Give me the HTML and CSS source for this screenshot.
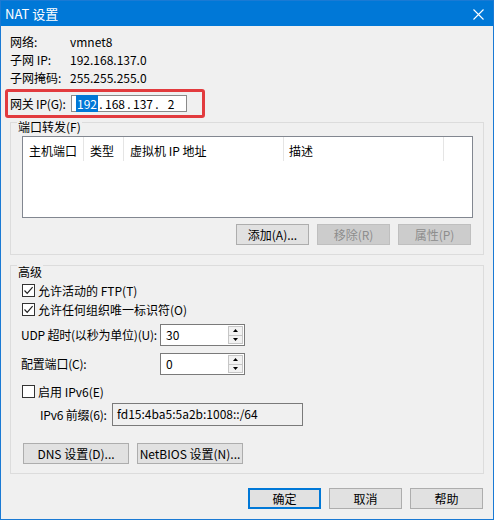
FILE: index.html
```html
<!DOCTYPE html>
<html lang="zh-CN">
<head>
<meta charset="utf-8">
<title>NAT 设置</title>
<link rel="stylesheet" href="styles.css">
</head>
<body>
<div class="win">
  <div class="titlebar">
    <span class="title">NAT 设置</span>
    <span class="close"><svg width="11" height="11" viewBox="0 0 11 11"><path d="M0.5 0.5L10.5 10.5M10.5 0.5L0.5 10.5" stroke="#fff" stroke-width="1.1" fill="none"/></svg></span>
  </div>
  <div class="content">
    <div class="info">
      <div class="irow"><span class="ilabel">网络:</span><span>vmnet8</span></div>
      <div class="irow"><span class="ilabel">子网 IP:</span><span>192.168.137.0</span></div>
      <div class="irow"><span class="ilabel">子网掩码:</span><span>255.255.255.0</span></div>
    </div>
    <div class="gw">
      <span class="glab">网关 IP(G):</span>
      <div class="ipfield">
        <span class="seg"><span class="sel">192</span></span><span class="dot">.</span>
        <span class="seg">168</span><span class="dot">.</span>
        <span class="seg">137</span><span class="dot">.</span>
        <span class="seg">2</span>
      </div>
      <span class="mark"></span>
    </div>

    <div class="group port">
      <div class="gtitle gt-port">端口转发(F)</div>
      <div class="list">
        <div class="lhead">
          <div class="col c1">主机端口</div>
          <div class="col c2">类型</div>
          <div class="col c3">虚拟机 IP 地址</div>
          <div class="col c4">描述</div>
        </div>
      </div>
      <div class="btnrow">
        <div class="btn">添加(A)...</div>
        <div class="btn dis">移除(R)</div>
        <div class="btn dis">属性(P)</div>
      </div>
    </div>

    <div class="group adv">
      <div class="gtitle gt-adv">高级</div>
      <div class="chkrow first">
        <span class="cb"><svg width="11" height="11" viewBox="0 0 11 11"><path d="M1.5 5.5L4.2 8.3L9.6 2.2" stroke="#222" stroke-width="1.2" fill="none"/></svg></span>
        <span>允许活动的 FTP(T)</span>
      </div>
      <div class="chkrow">
        <span class="cb"><svg width="11" height="11" viewBox="0 0 11 11"><path d="M1.5 5.5L4.2 8.3L9.6 2.2" stroke="#222" stroke-width="1.2" fill="none"/></svg></span>
        <span>允许任何组织唯一标识符(O)</span>
      </div>
      <div class="frow udp">
        <span class="flabel">UDP 超时(以秒为单位)(U):</span>
        <div class="spin">
          <span class="val">30</span>
          <div class="sbtns">
            <span class="sb"><svg width="5" height="3" viewBox="0 0 5 3"><path d="M0 3L2.5 0L5 3Z" fill="#000"/></svg></span>
            <span class="sb"><svg width="5" height="3" viewBox="0 0 5 3"><path d="M0 0L2.5 3L5 0Z" fill="#000"/></svg></span>
          </div>
        </div>
      </div>
      <div class="frow cport">
        <span class="flabel">配置端口(C):</span>
        <div class="spin">
          <span class="val">0</span>
          <div class="sbtns">
            <span class="sb"><svg width="5" height="3" viewBox="0 0 5 3"><path d="M0 3L2.5 0L5 3Z" fill="#000"/></svg></span>
            <span class="sb"><svg width="5" height="3" viewBox="0 0 5 3"><path d="M0 0L2.5 3L5 0Z" fill="#000"/></svg></span>
          </div>
        </div>
      </div>
      <div class="chkrow v6">
        <span class="cb"></span>
        <span>启用 IPv6(E)</span>
      </div>
      <div class="prow">
        <span class="plabel">IPv6 前缀(6):</span>
        <div class="pfield">fd15:4ba5:5a2b:1008::/64</div>
      </div>
      <div class="dnsrow">
        <div class="btn wide">DNS 设置(D)...</div>
        <div class="btn wide">NetBIOS 设置(N)...</div>
      </div>
    </div>

    <div class="footer">
      <div class="btn def">确定</div>
      <div class="btn">取消</div>
      <div class="btn">帮助</div>
    </div>
  </div>
</div>
</body>
</html>
```
FILE: styles.css
```css
* { box-sizing: border-box; }
html, body { margin: 0; padding: 0; }
body {
  width: 494px;
  height: 520px;
  background: #f0f0f0;
  font-family: "Noto Sans CJK SC", "Noto Sans", sans-serif;
  font-size: 12px;
  color: #000;
}
.win {
  width: 494px;
  height: 520px;
  border: 1px solid #1a7ad4;
  background: #f0f0f0;
  display: flex;
  flex-direction: column;
}
.titlebar {
  height: 25px;
  flex: none;
  background: #0078d7;
  color: #fff;
  display: flex;
  align-items: center;
  justify-content: space-between;
  padding: 0 9px 0 4px;
}
.title { font-size: 13px; line-height: 16px; }
.close { display: flex; margin-top: 1px; }

.content { padding: 7px 9px 0 9px; }

.irow { display: flex; height: 18px; line-height: 18px; }
.ilabel { width: 60px; flex: none; white-space: nowrap; }

.gw {
  position: relative;
  display: flex;
  align-items: center;
  height: 19px;
  margin-top: 7px;
}
.glab { width: 61px; flex: none; white-space: nowrap; line-height: 16px; letter-spacing: -0.2px; }
.ipfield {
  width: 116px;
  flex: none;
  height: 17px;
  background: #fff;
  border: 1px solid #8a8a8a;
  display: flex;
  align-items: center;
  padding-left: 4px;
  line-height: 13px;
}
.seg { width: 22px; text-align: center; }
.dot { width: 6px; text-align: center; }
.sel { background: #0078d7; color: #fff; padding: 0 1px; }
.mark {
  position: absolute;
  left: -5px;
  top: -5px;
  width: 200px;
  height: 29px;
  border: 3px solid #e23b3e;
  border-radius: 3px;
}

.group { border: 1px solid #dcdcdc; }
.port { margin-top: 9px; height: 133px; }
.adv { margin-top: 10px; height: 209px; }
.gtitle {
  width: fit-content;
  background: #f0f0f0;
  padding: 0 1px;
  margin-left: 6px;
  line-height: 14px;
}
.gt-port { margin-top: -3px; }
.gt-adv { margin-top: -1px; }

.list {
  margin: 2px 0 0 11px;
  width: 451px;
  height: 82px;
  background: #fff;
  border: 1px solid #828790;
}
.lhead { display: flex; height: 24px; }
.col {
  height: 24px;
  border-right: 1px solid #e5e5e5;
  padding: 4px 0 0 6px;
  line-height: 20px;
  white-space: nowrap;
}
.c1 { width: 61px; }
.c2 { width: 40px; }
.c3 { width: 160px; }
.c4 { width: 160px; padding-left: 5px; }

.btnrow {
  display: flex;
  justify-content: flex-end;
  gap: 8px;
  margin: 6px 12px 0 0;
}
.btn {
  width: 73px;
  height: 21px;
  flex: none;
  background: #e1e1e1;
  border: 1px solid #adadad;
  display: flex;
  align-items: center;
  justify-content: center;
  line-height: 14px;
  white-space: nowrap;
}
.btn.dis { background: #cccccc; border-color: #bfbfbf; color: #8d8d8d; }
.btn.wide { width: 106px; }
.btn.def { border-color: #0078d7; box-shadow: inset 0 0 0 1px #0078d7; }

.chkrow {
  display: flex;
  align-items: center;
  gap: 3px;
  height: 19px;
  margin-left: 11px;
  line-height: 16px;
  white-space: nowrap;
}
.chkrow.first { margin-top: 2px; }
.chkrow.v6 { margin-top: 7px; }
.cb {
  width: 13px;
  height: 13px;
  flex: none;
  border: 1px solid #333;
  background: #fff;
  display: flex;
}

.frow {
  display: flex;
  align-items: center;
  height: 22px;
  margin-left: 10px;
}
.frow.udp { margin-top: 5px; }
.frow.cport { margin-top: 7px; }
.flabel { width: 139px; flex: none; white-space: nowrap; line-height: 16px; letter-spacing: -0.2px; }
.spin {
  width: 85px;
  height: 22px;
  flex: none;
  background: #fff;
  border: 1px solid #7a7a7a;
  padding: 1px;
  display: flex;
  justify-content: space-between;
}
.val { padding-left: 4px; line-height: 18px; }
.sbtns { width: 15px; display: flex; flex-direction: column; }
.sb {
  flex: 1;
  border: 1px solid #c6c6c6;
  background: #f2f2f2;
  display: flex;
  align-items: center;
  justify-content: center;
}
.sb + .sb { border-top: none; }

.prow {
  display: flex;
  align-items: center;
  height: 23px;
  margin: 2px 0 0 29px;
}
.plabel { width: 72px; flex: none; white-space: nowrap; line-height: 16px; letter-spacing: -0.2px; }
.pfield {
  width: 191px;
  flex: none;
  height: 23px;
  border: 1px solid #7a7a7a;
  background: #f0f0f0;
  padding-left: 4px;
  line-height: 19px;
}

.dnsrow {
  display: flex;
  gap: 8px;
  margin: 17px 0 0 12px;
}

.footer {
  display: flex;
  justify-content: flex-end;
  gap: 8px;
  margin: 14px 1px 0 0;
}
```
